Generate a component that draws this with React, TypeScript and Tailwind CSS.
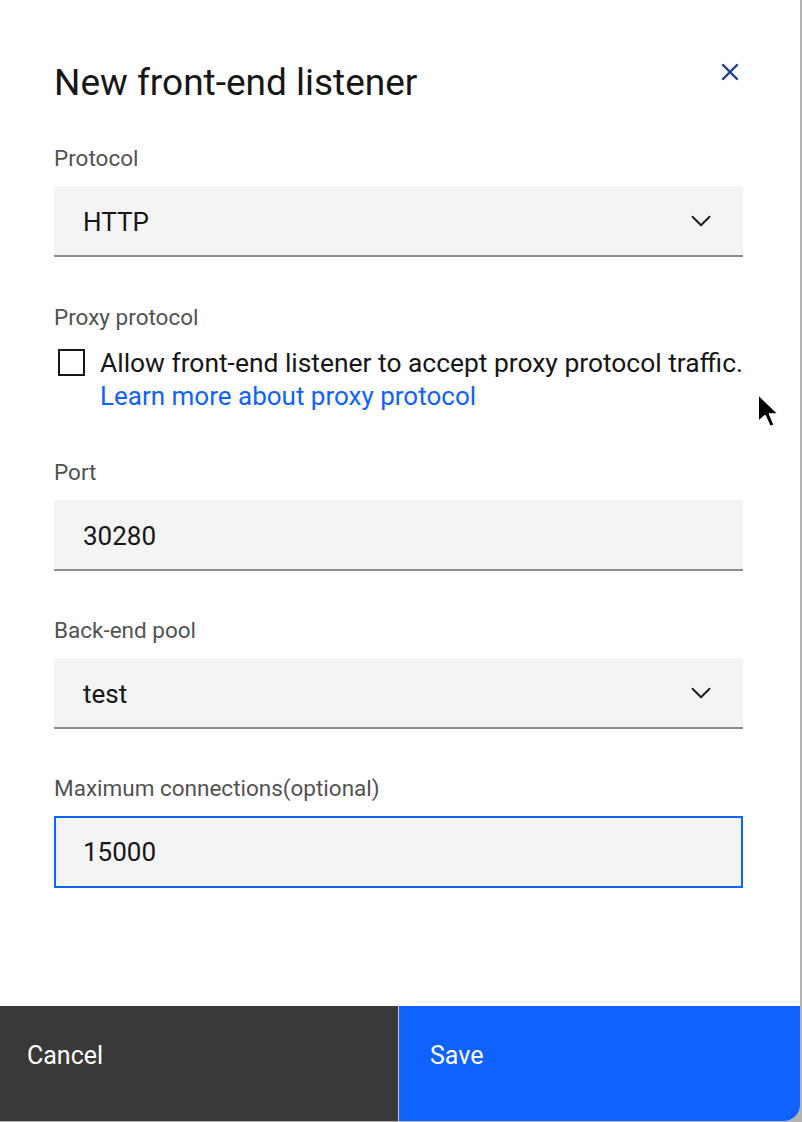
import { ChevronDown, X } from "lucide-react";

function FieldLabel({ children }: { children: React.ReactNode }) {
  return <div className="text-[22.5px] leading-[24px] text-[#525252]">{children}</div>;
}

function SelectField({ value }: { value: string }) {
  return (
    <div className="mt-4 flex h-[71px] items-center justify-between border-b-2 border-[#8d8d8d] bg-[#f4f4f4] pl-[29px] pr-[25px] pt-[4px]">
      <span className="text-[26px] text-[#161616]">{value}</span>
      <ChevronDown size={34} strokeWidth={1.3} className="-mt-[3px] text-[#161616]" />
    </div>
  );
}

export default function App() {
  return (
    <div className="h-[1122px] w-[802px] bg-[#b4b4b4] font-['Roboto',sans-serif]">
      <div className="relative flex h-[1121px] w-[800px] flex-col overflow-hidden rounded-br-[16px] bg-white">
        {/* Header */}
        <div className="flex items-start justify-between pl-[54px] pr-[56px] pt-[58px]">
          <h2 className="mt-[5px] text-[37px] font-normal leading-[40px] text-[#161616]">
            New front-end listener
          </h2>
          <div className="flex h-7 w-7 items-center justify-center text-[#203f8f]">
            <X size={28} strokeWidth={2.1} />
          </div>
        </div>

        {/* Form */}
        <div className="flex flex-1 flex-col pl-[54px] pr-[57px]">
          <div className="mt-[43px]">
            <FieldLabel>Protocol</FieldLabel>
            <SelectField value="HTTP" />
          </div>

          <div className="mt-[48px]">
            <FieldLabel>Proxy protocol</FieldLabel>
            <div className="mt-[18px] flex items-start">
              <div className="ml-1 mt-[2px] h-[27px] w-[27px] shrink-0 border-2 border-[#161616] bg-white" />
              <div className="ml-[15px]">
                <div className="text-[26.4px] leading-[33px] text-[#161616]">
                  Allow front-end listener to accept proxy protocol traffic.
                </div>
                <a className="block text-[26px] leading-[33px] text-[#0f62fe]">
                  Learn more about proxy protocol
                </a>
              </div>
            </div>
          </div>

          <div className="mt-[47px]">
            <FieldLabel>Port</FieldLabel>
            <div className="mt-4 flex h-[71px] items-center border-b-2 border-[#8d8d8d] bg-[#f4f4f4] pl-[29px] pt-[4px]">
              <span className="text-[26px] text-[#161616]">30280</span>
            </div>
          </div>

          <div className="mt-[47px]">
            <FieldLabel>Back-end pool</FieldLabel>
            <SelectField value="test" />
          </div>

          <div className="mt-[47px]">
            <FieldLabel>Maximum connections(optional)</FieldLabel>
            <div className="mt-4 flex h-[72px] items-center border-2 border-[#0f62fe] bg-[#f4f4f4] pl-[27px]">
              <span className="text-[26px] text-[#161616]">15000</span>
            </div>
          </div>
        </div>

        {/* Footer buttons */}
        <div className="flex h-[115px]">
          <div className="w-[398px] bg-[#393939] pl-[27px] pt-[35px] text-[25px] leading-[30px] text-white">
            Cancel
          </div>
          <div className="w-px bg-[#c6c6c6]" />
          <div className="flex-1 bg-[#0f62fe] pl-[31px] pt-[35px] text-[25px] leading-[30px] text-white">
            Save
          </div>
        </div>

        {/* Mouse pointer */}
        <svg
          className="absolute left-[755px] top-[391px]"
          width="26"
          height="40"
          viewBox="0 0 13 20"
        >
          <path
            d="M1.5 1.5 L1.5 15.5 L5 12.5 L7.5 18 L9.8 17 L7.4 11.6 L12 11.6 Z"
            fill="#000"
            stroke="#fff"
            strokeWidth="1"
            strokeLinejoin="round"
          />
        </svg>
      </div>
    </div>
  );
}
